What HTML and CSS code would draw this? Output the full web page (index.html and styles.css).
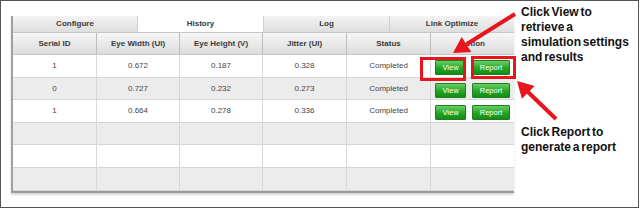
FILE: index.html
```html
<!DOCTYPE html>
<html>
<head>
<meta charset="utf-8">
<link rel="stylesheet" href="styles.css">
</head>
<body>
<div class="frame">
  <div class="panel">
    <div class="tabs">
      <div class="tab t1">Configure</div>
      <div class="tab t2 active">History</div>
      <div class="tab t3">Log</div>
      <div class="tab t4">Link Optimize</div>
    </div>
    <div class="grid head">
      <div class="cell">Serial ID</div>
      <div class="cell">Eye Width (UI)</div>
      <div class="cell">Eye Height (V)</div>
      <div class="cell">Jitter (UI)</div>
      <div class="cell">Status</div>
      <div class="cell last">Action</div>
    </div>
    <div class="grid row r23">
      <div class="cell">1</div>
      <div class="cell">0.672</div>
      <div class="cell">0.187</div>
      <div class="cell">0.328</div>
      <div class="cell">Completed</div>
      <div class="cell last act"><span class="btn view">View</span><span class="btn report">Report</span></div>
    </div>
    <div class="grid row r22 alt">
      <div class="cell">0</div>
      <div class="cell">0.727</div>
      <div class="cell">0.232</div>
      <div class="cell">0.273</div>
      <div class="cell">Completed</div>
      <div class="cell last act"><span class="btn view">View</span><span class="btn report">Report</span></div>
    </div>
    <div class="grid row r23">
      <div class="cell">1</div>
      <div class="cell">0.664</div>
      <div class="cell">0.278</div>
      <div class="cell">0.336</div>
      <div class="cell">Completed</div>
      <div class="cell last act"><span class="btn view">View</span><span class="btn report">Report</span></div>
    </div>
    <div class="grid row r22 alt">
      <div class="cell"></div><div class="cell"></div><div class="cell"></div><div class="cell"></div><div class="cell"></div><div class="cell last"></div>
    </div>
    <div class="grid row r23">
      <div class="cell"></div><div class="cell"></div><div class="cell"></div><div class="cell"></div><div class="cell"></div><div class="cell last"></div>
    </div>
    <div class="grid row r23 alt">
      <div class="cell"></div><div class="cell"></div><div class="cell"></div><div class="cell"></div><div class="cell"></div><div class="cell last"></div>
    </div>
  </div>
  <div class="notes">
    <p class="note">Click View to<br>retrieve a<br>simulation settings<br>and results</p>
    <p class="note note2">Click Report to<br>generate a report</p>
  </div>
  <svg class="overlay" width="639" height="208" viewBox="0 0 639 208">
    <rect x="421.5" y="58.5" width="43" height="21" fill="none" stroke="#e8151d" stroke-width="3"/>
    <rect x="472.5" y="57.5" width="42" height="20" fill="none" stroke="#e8151d" stroke-width="3"/>
    <line x1="515" y1="14" x2="467" y2="44" stroke="#e8151d" stroke-width="4"/>
    <polygon points="453,53 471.3,52.1 461.7,36.9" fill="#e8151d"/>
    <line x1="556" y1="119" x2="528" y2="92" stroke="#e8151d" stroke-width="4"/>
    <polygon points="517,81 534.7,85.9 521.9,98.7" fill="#e8151d"/>
  </svg>
</div>
</body>
</html>
```
FILE: styles.css
```css
html, body {
  margin: 0;
  padding: 0;
  background: #fff;
}
.frame {
  position: relative;
  width: 639px;
  height: 208px;
  box-sizing: border-box;
  border: 1px solid #555;
  display: flex;
  align-items: flex-start;
  padding-left: 10px;
  font-family: "Liberation Sans", Arial, sans-serif;
}
.panel {
  margin-top: 15px;
  width: 503px;
  box-sizing: border-box;
  border-left: 2px solid #a0a0a0;
  border-bottom: 2px solid #9a9a9a;
  box-shadow: 0 2px 2px #d8d8d8;
}
.tabs {
  display: flex;
  height: 16px;
}
.tab {
  box-sizing: border-box;
  height: 16px;
  line-height: 15px;
  text-align: center;
  font-size: 8px;
  font-weight: bold;
  color: #3a3a3a;
  background: linear-gradient(#f4f4f4, #dedede);
  border-right: 1px solid #cfcfcf;
}
.tab.active {
  background: #fff;
}
.t1 { width: 125px; }
.t2 { width: 126px; }
.t3 { width: 126px; }
.t4 { width: 124px; border-right: none; }
.grid {
  display: grid;
  grid-template-columns: 84px 83px 83px 84px 84px 83px;
  box-sizing: border-box;
}
.head {
  height: 23px;
  border-top: 1px solid #c8c8c8;
  border-bottom: 1px solid #c8c8c8;
  background: linear-gradient(#f7f7f7, #dcdcdc);
}
.head .cell {
  line-height: 21px;
  font-weight: bold;
  color: #3a3a3a;
  border-right: 1px solid #bdbdbd;
}
.cell {
  box-sizing: border-box;
  text-align: center;
  font-size: 8px;
  color: #444;
  border-right: 1px solid #d8d8d8;
}
.cell.last {
  border-right: none;
}
.row {
  background: #fff;
  border-bottom: 1px solid #d6d6d6;
}
.row.alt {
  background: #ececec;
}
.r23 { height: 23px; }
.r22 { height: 22px; }
.r23 .cell { line-height: 22px; }
.r22 .cell { line-height: 21px; }
.act {
  display: flex;
  align-items: center;
  justify-content: center;
  gap: 6px;
  padding-top: 3px;
}
.btn {
  display: block;
  box-sizing: border-box;
  height: 15px;
  line-height: 13px;
  font-size: 7.5px;
  color: #fff;
  text-align: center;
  background: linear-gradient(#66d066, #25a525 55%, #148c14);
  border: 1px solid #1f7d1f;
  border-radius: 1px;
}
.btn.view { width: 31px; }
.btn.report { width: 38px; }
.notes {
  margin-left: 7px;
  padding-top: 3.5px;
}
.note {
  margin: 0;
  font-size: 12px;
  line-height: 15px;
  font-weight: bold;
  color: #111;
  word-spacing: -1.5px;
  white-space: nowrap;
}
.note2 {
  margin-top: 60px;
}
.overlay {
  position: absolute;
  left: -1px;
  top: -1px;
  pointer-events: none;
}
```
